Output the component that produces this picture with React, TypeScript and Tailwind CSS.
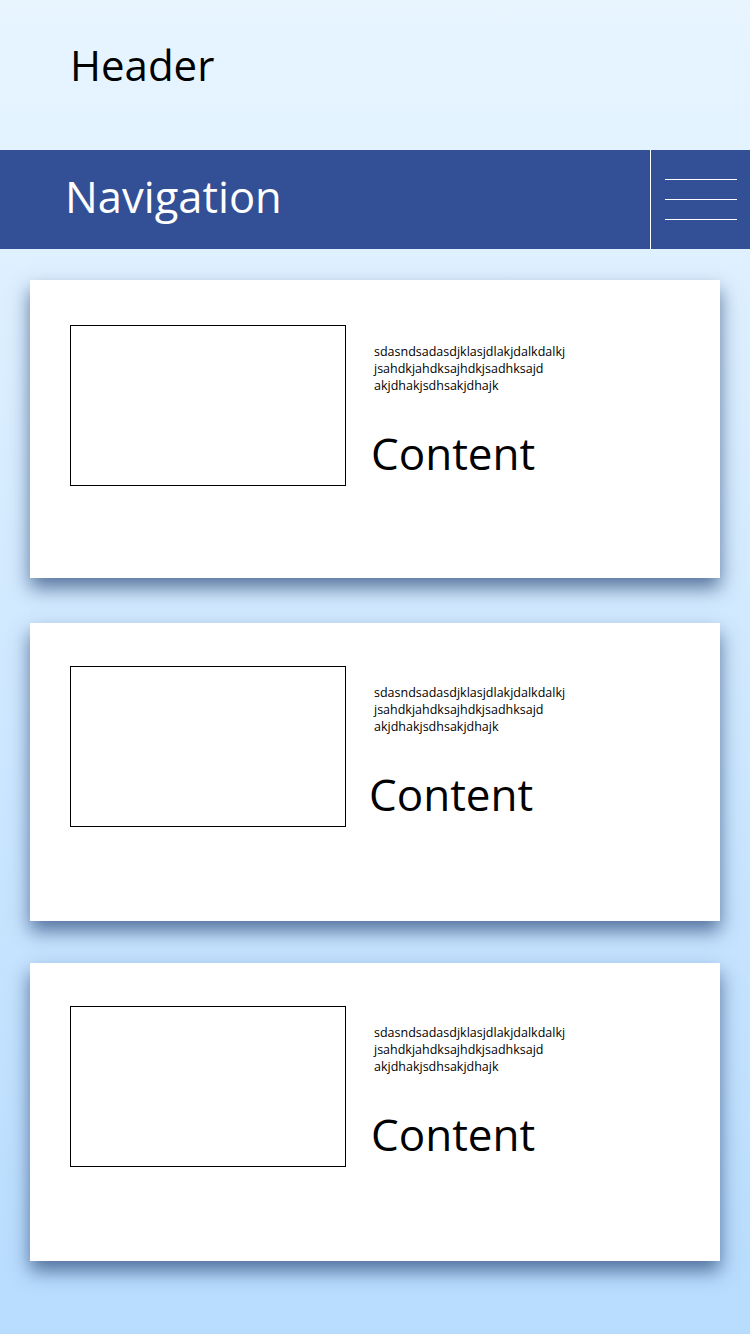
import React from "react";

const font = { fontFamily: '"Open Sans", "Noto Sans", sans-serif' };

function Card({ top, shift }: { top: "a" | "b"; shift?: boolean }) {
  return (
    <div
      className={`mx-[30px] h-[298px] bg-white shadow-[0_10px_18px_rgba(35,65,115,0.7)] flex pl-[40px] ${
        top === "a" ? "pt-[45px]" : "pt-[43px]"
      }`}
    >
      <div className="w-[276px] h-[161px] border border-black shrink-0" />
      <div className="ml-[26px] flex flex-col">
        <div className="pt-[18px] pl-[2px] text-[12.5px] leading-[17px] text-black">
          <div>sdasndsadasdjklasjdlakjdalkdalkj</div>
          <div>jsahdkjahdksajhdkjsadhksajd</div>
          <div>akjdhakjsdhsakjdhajk</div>
        </div>
        <div
          className={`mt-[37px] text-[44px] leading-[44px] text-black ${shift ? "-ml-[3px]" : "-ml-[1px]"}`}
        >
          Content
        </div>
      </div>
    </div>
  );
}

export default function App() {
  return (
    <div
      className="w-[750px] h-[1334px] overflow-hidden bg-gradient-to-b from-[#e8f5ff] to-[#b7dcfe]"
      style={font}
    >
      <div className="h-[150px] pl-[70px] pt-[44px] text-[42px] leading-[42px] text-black">Header</div>
      <nav className="h-[99px] bg-[#334f96] flex">
        <div className="flex-1 pl-[65px] pt-[25px] text-[43.5px] leading-[43px] text-white">Navigation</div>
        <div className="w-px bg-white" />
        <div className="w-[99px] flex flex-col gap-[19px] pt-[29px] pl-[14px]">
          <div className="w-[72px] h-px bg-white" />
          <div className="w-[72px] h-px bg-white" />
          <div className="w-[72px] h-px bg-white" />
        </div>
      </nav>
      <div className="pt-[31px] flex flex-col">
        <Card top="a" />
        <div className="mt-[45px]">
          <Card top="b" shift />
        </div>
        <div className="mt-[42px]">
          <Card top="b" />
        </div>
      </div>
    </div>
  );
}
